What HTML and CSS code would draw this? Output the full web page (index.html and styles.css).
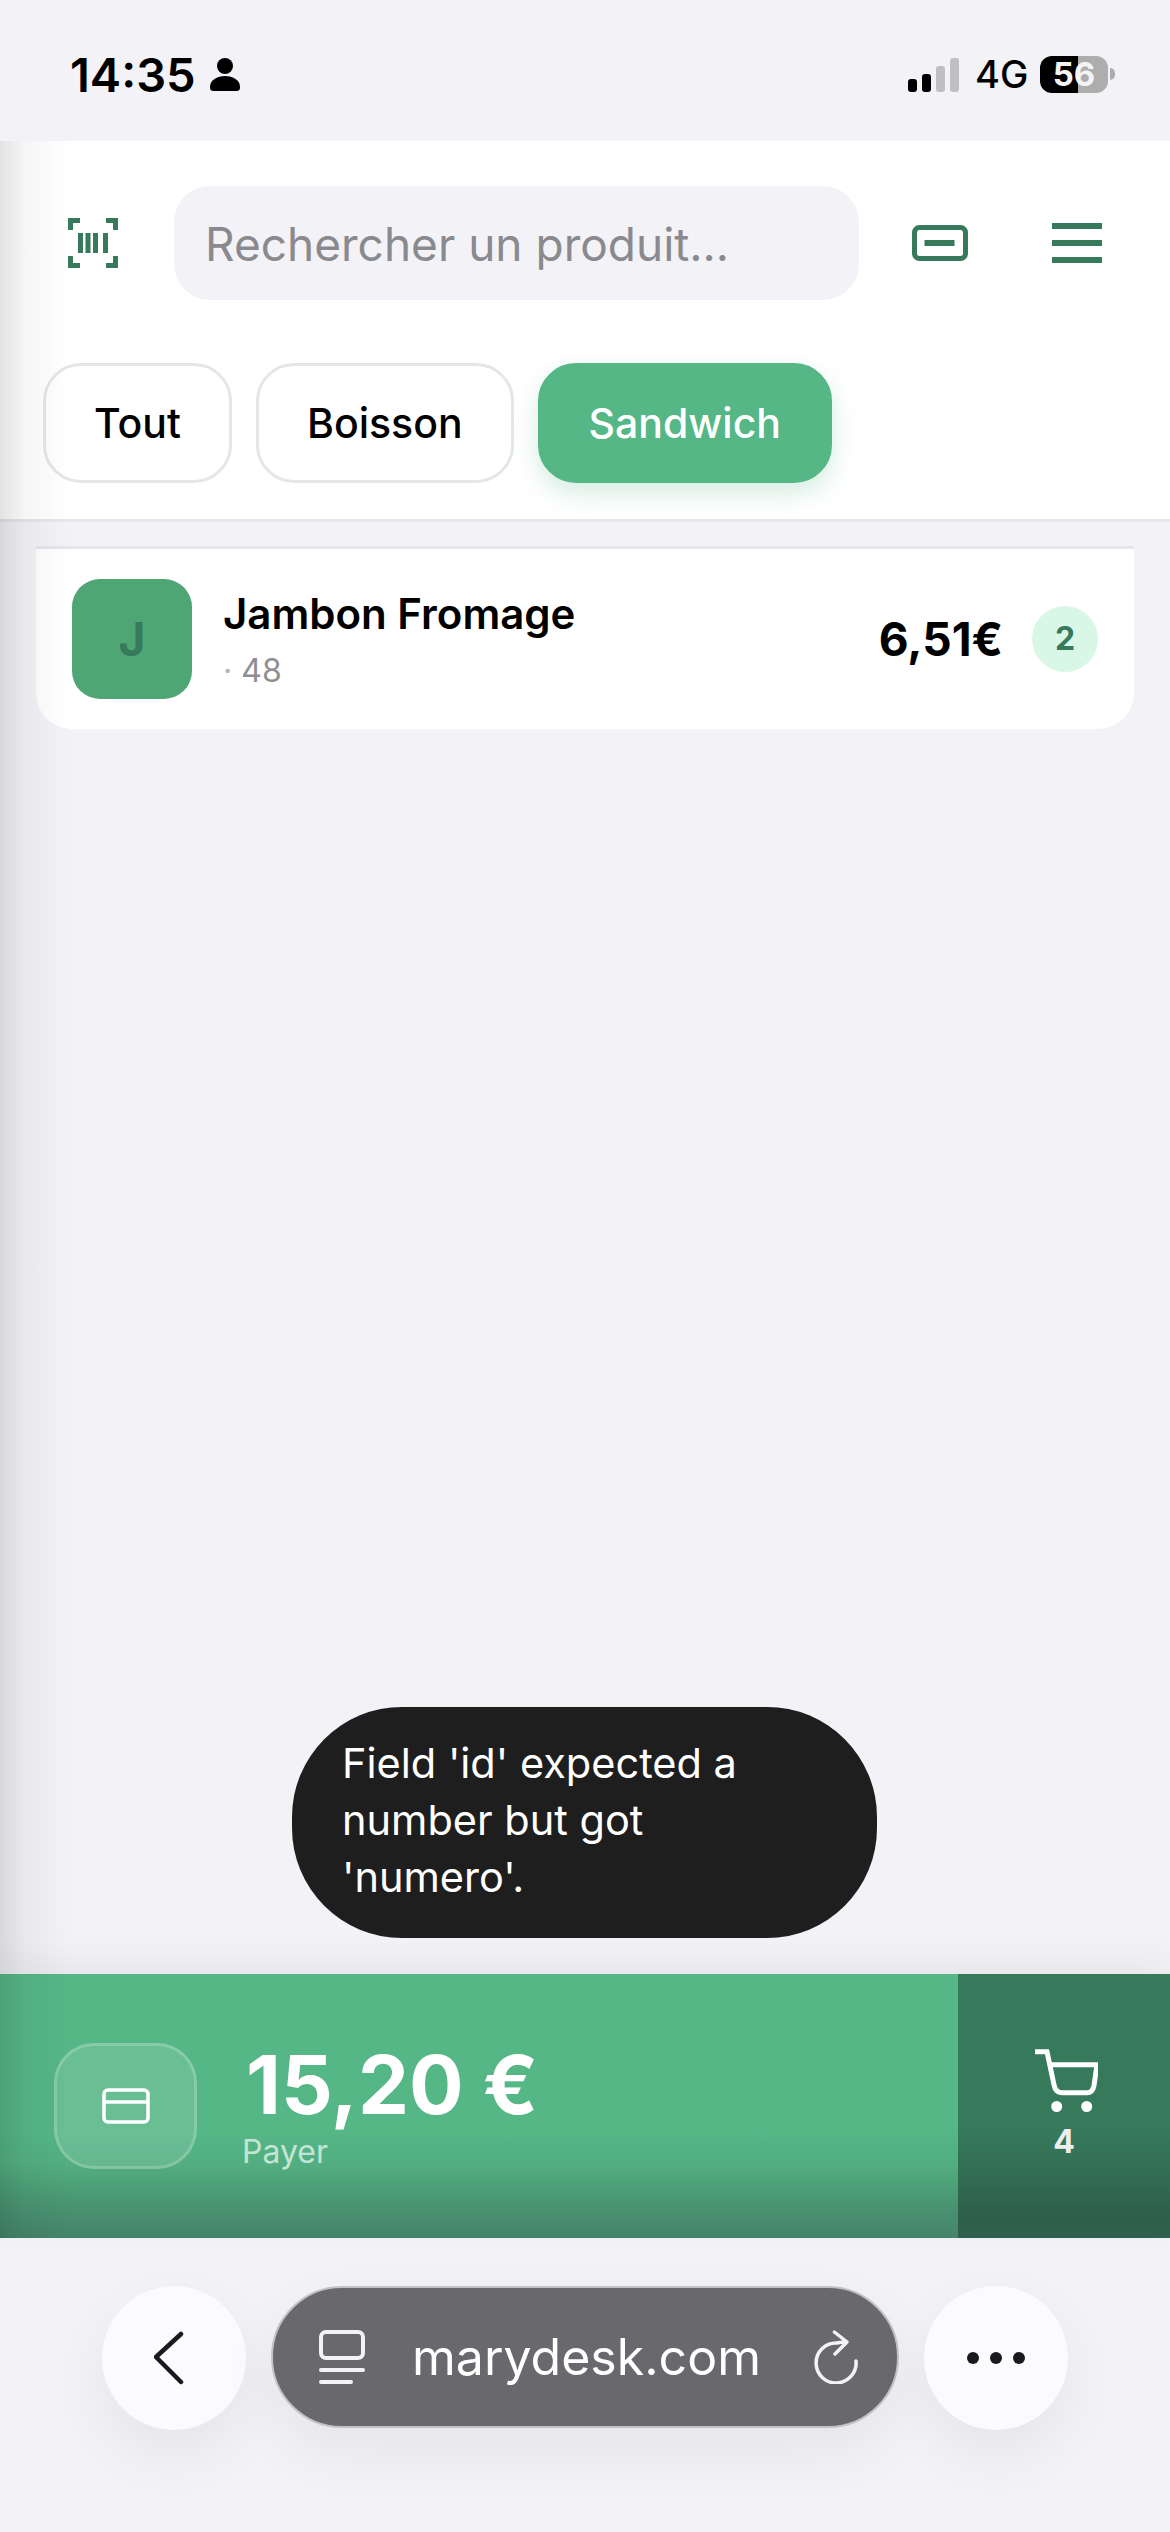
FILE: index.html
```html
<!DOCTYPE html>
<html lang="fr">
<head>
    <meta charset="UTF-8">
    <meta name="viewport" content="width=device-width, initial-scale=1.0">
    <title>Caisse</title>
    <link rel="stylesheet" href="styles.css">
</head>
<body>
    <div class="status-bar">
        <div class="status-left">
            <span class="status-time">14:35</span>
            <svg class="icon-person" viewBox="0 0 30 33"><circle cx="15" cy="8" r="8"/><path d="M0 29c0-7 7-11 15-11s15 4 15 11c0 3-1 4-4 4H4c-3 0-4-1-4-4z"/></svg>
        </div>
        <div class="status-right">
            <div class="signal">
                <span class="bar bar-1"></span>
                <span class="bar bar-2"></span>
                <span class="bar bar-3"></span>
                <span class="bar bar-4"></span>
            </div>
            <span class="network">4G</span>
            <div class="battery">56</div>
            <span class="battery-nub"></span>
        </div>
    </div>

    <header class="top">
        <div class="search-row">
            <svg class="icon-scan" viewBox="0 0 50 50">
                <path d="M0 12V0h12v5H5v7zM38 0h12v12h-5V5h-7zM0 38h5v7h7v5H0zM45 38h5v12H38v-5h7z"/>
                <rect x="10" y="15" width="5" height="20"/>
                <rect x="17.5" y="15" width="5" height="20"/>
                <rect x="25" y="15" width="5" height="20"/>
                <rect x="35" y="15" width="5" height="20"/>
            </svg>
            <div class="search">Rechercher un produit...</div>
            <svg class="icon-ticket" viewBox="0 0 56 36">
                <rect x="2.500" y="2.500" width="51" height="31" rx="5"/>
                <path d="M12.500 18h30"/>
            </svg>
            <svg class="icon-menu" viewBox="0 0 50 40">
                <path d="M0 3h50M0 20h50M0 37h50"/>
            </svg>
        </div>
        <div class="chips">
            <button class="chip">Tout</button>
            <button class="chip">Boisson</button>
            <button class="chip chip-active">Sandwich</button>
        </div>
    </header>

    <main class="content">
        <div class="product">
            <div class="product-thumb">J</div>
            <div class="product-info">
                <div class="product-name">Jambon Fromage</div>
                <div class="product-stock"><span class="dot">·</span> 48</div>
            </div>
            <div class="product-price">6,51€</div>
            <div class="product-qty">2</div>
        </div>
        <div class="toast">Field 'id' expected a number but got 'numero'.</div>
    </main>

    <section class="pay-bar">
        <div class="pay-main">
            <div class="pay-icon">
                <svg class="icon-card" viewBox="0 0 48 36">
                    <rect x="2" y="2" width="44" height="32" rx="4"/>
                    <path d="M2 14h44"/>
                </svg>
            </div>
            <div class="pay-text">
                <div class="pay-total">15,20 €</div>
                <div class="pay-label">Payer</div>
            </div>
        </div>
        <div class="pay-cart">
            <svg class="icon-cart" viewBox="0 0 63 63">
                <path d="M0 2.700h12l7 33c1 5 3 8 8 8h25c4 0 6-2 7-7l3-21H15"/>
                <circle cx="21.700" cy="57.500" r="5.500"/>
                <circle cx="51.700" cy="57.500" r="5.500"/>
            </svg>
            <div class="cart-count">4</div>
        </div>
    </section>

    <nav class="browser-bar">
        <div class="round-btn">
            <svg class="icon-back" viewBox="0 0 30 54"><path d="M27 3L2 26l25 25"/></svg>
        </div>
        <div class="url-pill">
            <svg class="icon-tabs" viewBox="0 0 46 54">
                <rect x="2" y="2" width="42" height="26" rx="5"/>
                <path d="M2 40h42M2 52h30"/>
            </svg>
            <span class="url-text">marydesk.com</span>
            <svg class="icon-reload" viewBox="0 0 45 54">
                <path d="M42 31A20 20 0 1 1 22.500 13Q28 12 33 12M20.400 2L33 12 21 24"/>
            </svg>
        </div>
        <div class="round-btn">
            <div class="dots"><span></span><span></span><span></span></div>
        </div>
    </nav>

    <div class="edge-shadow"></div>
</body>
</html>
```

FILE: styles.css
```css
* {
    box-sizing: border-box;
}
body {
    position: relative;
    display: flex;
    flex-direction: column;
    width: 1170px;
    height: 2532px;
    margin: 0;
    overflow: hidden;
    font-family: Inter, "Liberation Sans", sans-serif;
    background-color: #f2f2f7;
    color: #000;
}

/* status bar */
.status-bar {
    display: flex;
    justify-content: space-between;
    align-items: center;
    height: 141px;
    padding: 7px 55px 0 70px;
}
.status-left {
    display: flex;
    align-items: center;
    gap: 14px;
}
.status-time {
    font-size: 47px;
    font-weight: 600;
}
.icon-person {
    width: 30px;
    height: 33px;
}
.status-right {
    display: flex;
    align-items: center;
}
.signal {
    display: flex;
    align-items: flex-end;
    gap: 5px;
    height: 34px;
    margin-top: 1px;
    margin-right: 16px;
}
.bar {
    width: 9px;
    border-radius: 3px;
    background-color: #000;
}
.bar-1 { height: 13px; }
.bar-2 { height: 18px; }
.bar-3 { height: 26px; background-color: #bfbfc4; }
.bar-4 { height: 34px; background-color: #bfbfc4; }
.network {
    width: 65px;
    font-size: 38px;
    font-weight: 500;
}
.battery {
    width: 68px;
    height: 37px;
    border-radius: 12px;
    background: linear-gradient(to right, #000 38px, #adadad 38px);
    color: #f4f4f4;
    font-size: 33px;
    font-weight: 700;
    line-height: 37px;
    text-align: center;
}
.battery-nub {
    width: 5px;
    height: 12px;
    margin-left: 2px;
    border-radius: 0 6px 6px 0;
    background-color: #adadad;
}

/* header */
.top {
    padding: 45px 0 36px;
    border-bottom: 3px solid #e6e6e8;
    background-color: #fff;
}
.search-row {
    display: flex;
    align-items: center;
    padding: 0 68px;
}
.icon-scan {
    flex: none;
    width: 50px;
    height: 50px;
    margin-right: 56px;
    fill: #36795b;
}
.search {
    flex: 1;
    height: 114px;
    padding-left: 31px;
    border-radius: 36px;
    background-color: #f2f2f7;
    color: #8a8a8e;
    font-size: 46px;
    line-height: 116px;
}
.icon-ticket {
    flex: none;
    width: 56px;
    height: 36px;
    margin: 0 84px 0 53px;
    fill: none;
    stroke: #36795b;
    stroke-width: 5;
}
.icon-ticket path {
    stroke-width: 6;
}
.icon-menu {
    flex: none;
    width: 50px;
    height: 40px;
    fill: none;
    stroke: #36795b;
    stroke-width: 6;
}
.chips {
    display: flex;
    gap: 24px;
    margin-top: 63px;
    padding-left: 43px;
}
.chip {
    height: 120px;
    padding: 0 48px;
    border: 3px solid #e6e6e8;
    border-radius: 38px;
    background-color: #fff;
    color: #000;
    font-family: inherit;
    font-size: 41px;
    font-weight: 500;
}
.chip-active {
    border-color: #55b686;
    background-color: #55b686;
    color: #fff;
    box-shadow: 0 10px 24px rgba(85, 182, 134, 0.25);
}

/* product list */
.content {
    position: relative;
    flex: 1;
    padding: 24px 36px 0;
}
.product {
    display: flex;
    align-items: center;
    padding: 30px 36px;
    border-top: 3px solid #e6e6e8;
    border-radius: 0 0 36px 36px;
    background-color: #fff;
}
.product-thumb {
    width: 120px;
    height: 120px;
    border-radius: 28px;
    background-color: #4ea674;
    color: #36795b;
    font-size: 46px;
    font-weight: 700;
    line-height: 120px;
    text-align: center;
}
.product-info {
    flex: 1;
    margin-left: 31px;
}
.product-name {
    font-size: 42px;
    font-weight: 600;
    line-height: 50px;
}
.product-stock {
    margin-top: 12px;
    color: #8e8e93;
    font-size: 32px;
}
.dot {
    color: #b5b5b8;
}
.product-price {
    font-size: 46px;
    font-weight: 700;
}
.product-qty {
    width: 66px;
    height: 66px;
    margin-left: 29px;
    border-radius: 50%;
    background-color: #d9f7e6;
    color: #36795b;
    font-size: 32px;
    font-weight: 700;
    line-height: 66px;
    text-align: center;
}
.toast {
    position: absolute;
    left: 292px;
    bottom: 36px;
    width: 585px;
    height: 231px;
    padding: 28px 50px;
    border-radius: 110px;
    background-color: #1e1e1f;
    color: #fff;
    font-size: 41.500px;
    line-height: 57px;
}

/* pay bar */
.pay-bar {
    display: flex;
    height: 264px;
    box-shadow: 0 -14px 34px rgba(0, 0, 0, 0.05);
}
.pay-main {
    flex: 1;
    display: flex;
    align-items: center;
    padding-left: 54px;
    background: linear-gradient(to bottom, #55b686 0%, #55b686 60%, #52ae80 72%, #4a9872 85%, #44836a 100%);
}
.pay-icon {
    display: flex;
    justify-content: center;
    align-items: center;
    width: 143px;
    height: 126px;
    border: 3px solid rgba(255, 255, 255, 0.2);
    border-radius: 40px;
    background-color: rgba(255, 255, 255, 0.12);
}
.icon-card {
    width: 48px;
    height: 36px;
    fill: none;
    stroke: #fff;
    stroke-width: 3.500;
}
.pay-text {
    margin-left: 45px;
}
.pay-total {
    padding-left: 4px;
    color: #fff;
    font-size: 81px;
    font-weight: 700;
    line-height: 88px;
}
.pay-label {
    margin-top: 3px;
    color: #c3e5d5;
    font-size: 32px;
    line-height: 40px;
}
.pay-cart {
    display: flex;
    flex-direction: column;
    align-items: center;
    width: 212px;
    padding-top: 75px;
    background: linear-gradient(to bottom, #36795b 0%, #36795b 60%, #2e5f4c 92%, #2f614e 100%);
}
.icon-cart {
    width: 63px;
    height: 63px;
    margin-left: 5px;
    fill: #fff;
}
.icon-cart path {
    fill: none;
    stroke: #fff;
    stroke-width: 5;
}
.cart-count {
    margin-top: 10px;
    color: #eee;
    font-size: 32px;
    font-weight: 700;
    line-height: 40px;
}

/* browser bar */
.browser-bar {
    display: flex;
    align-items: flex-start;
    gap: 25px;
    height: 294px;
    padding: 48px 0 0 102px;
}
.round-btn {
    display: flex;
    flex: none;
    justify-content: center;
    align-items: center;
    width: 144px;
    height: 144px;
    border-radius: 50%;
    background-color: #fbfbff;
    box-shadow: 0 24px 60px rgba(0, 0, 0, 0.06);
}
.icon-back {
    width: 30px;
    height: 54px;
    margin-left: -11px;
    fill: none;
    stroke: #1a1a1e;
    stroke-width: 4.500;
    stroke-linecap: round;
    stroke-linejoin: round;
}
.dots {
    display: flex;
    gap: 11px;
}
.dots span {
    width: 12px;
    height: 12px;
    border-radius: 50%;
    background-color: #1a1a1e;
}
.url-pill {
    display: flex;
    flex: none;
    align-items: center;
    width: 628px;
    height: 142px;
    padding: 0 38px 0 46px;
    border: 2px solid #c2c2c6;
    border-radius: 71px;
    background-color: #68686d;
    box-shadow: 0 24px 60px rgba(0, 0, 0, 0.06);
}
.icon-tabs {
    width: 46px;
    height: 54px;
    fill: none;
    stroke: #f2f2f7;
    stroke-width: 4;
    stroke-linecap: round;
}
.url-text {
    flex: 1;
    margin-left: 47px;
    color: #fff;
    font-size: 50px;
    white-space: nowrap;
}
.icon-reload {
    width: 45px;
    height: 54px;
    fill: none;
    stroke: #f2f2f7;
    stroke-width: 3.500;
    stroke-linecap: round;
    stroke-linejoin: round;
}

/* shade on the left edge of the page */
.edge-shadow {
    position: absolute;
    left: 0;
    top: 141px;
    bottom: 294px;
    width: 70px;
    background: linear-gradient(to right, rgba(0, 0, 0, 0.11), rgba(0, 0, 0, 0.04) 35%, transparent);
    pointer-events: none;
}
```
